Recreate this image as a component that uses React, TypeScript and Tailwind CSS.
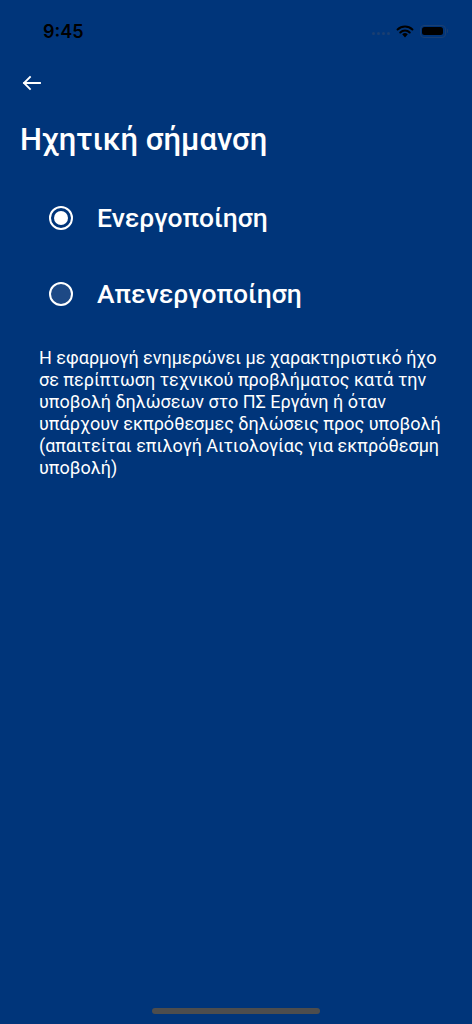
import React, { useState } from 'react';

const Radio = ({ checked }: { checked: boolean }) => (
  <span
    className={
      'flex h-[24px] w-[24px] items-center justify-center rounded-full border-2 border-white ' +
      (checked ? 'bg-transparent' : 'bg-[#1d4985]')
    }
  >
    {checked && <span className="h-[14px] w-[14px] rounded-full bg-white" />}
  </span>
);

export default function App() {
  const [enabled, setEnabled] = useState(true);

  return (
    <div className="relative flex h-[1024px] w-full flex-col bg-[#00357a] font-['Roboto',sans-serif] text-white">
      {/* Status bar */}
      <div className="flex h-[60px] items-center justify-between pl-[43px] pr-[24px] pt-[2px]">
        <span className="font-['Inter',sans-serif] text-[18px] font-semibold text-black">9:45</span>
        <div className="flex items-center gap-[6px]">
          <div className="flex items-center gap-[2px] pt-[4px]">
            <span className="h-[3px] w-[3px] rounded-full bg-[#1a3f72]" />
            <span className="h-[3px] w-[3px] rounded-full bg-[#1a3f72]" />
            <span className="h-[3px] w-[3px] rounded-full bg-[#1a3f72]" />
            <span className="h-[3px] w-[3px] rounded-full bg-[#1a3f72]" />
          </div>
          <svg width="18" height="13" viewBox="0 0 18 13">
            <path d="M9 12.5 L6.2 9.3 A4 4 0 0 1 11.8 9.3 Z" fill="black" />
            <path d="M4.3 7.4 A6.8 6.8 0 0 1 13.7 7.4" stroke="black" strokeWidth="2.1" fill="none" strokeLinecap="round" />
            <path d="M1.6 4.5 A10.6 10.6 0 0 1 16.4 4.5" stroke="black" strokeWidth="2.1" fill="none" strokeLinecap="round" />
          </svg>
          <div className="flex items-center">
            <div className="flex h-[13px] w-[26px] items-center rounded-[4px] border border-[#1a3f72] p-[1.5px]">
              <div className="h-full w-full rounded-[2.5px] bg-black" />
            </div>
            <div className="ml-[1px] h-[4px] w-[1.5px] rounded-r bg-[#1a3f72]" />
          </div>
        </div>
      </div>

      {/* App bar */}
      <div className="flex h-[46px] items-center pl-[22px]">
        <svg width="19" height="16" viewBox="0 0 19 16" fill="none">
          <path d="M18 8H2M8 2L2 8l6 6" stroke="white" strokeWidth="1.8" strokeLinecap="square" />
        </svg>
      </div>

      <h1 className="mt-[14px] pl-[20px] text-[31px] font-medium leading-[40px]">Ηχητική σήμανση</h1>

      <div className="mt-[46px] flex flex-col gap-[52px] pl-[49px]">
        <button className="flex items-center gap-[24px] text-left" onClick={() => setEnabled(true)}>
          <Radio checked={enabled} />
          <span className="text-[26.5px] font-medium leading-[24px]">Ενεργοποίηση</span>
        </button>
        <button className="flex items-center gap-[24px] text-left" onClick={() => setEnabled(false)}>
          <Radio checked={!enabled} />
          <span className="text-[26.5px] font-medium leading-[24px]">Απενεργοποίηση</span>
        </button>
      </div>

      <p className="mt-[41px] pl-[39px] pr-[20px] text-[18px] leading-[22px]">
        Η εφαρμογή ενημερώνει με χαρακτηριστικό ήχο σε περίπτωση τεχνικού προβλήματος κατά την
        υποβολή δηλώσεων στο ΠΣ Εργάνη ή όταν υπάρχουν εκπρόθεσμες δηλώσεις προς υποβολή
        (απαιτείται επιλογή Αιτιολογίας για εκπρόθεσμη υποβολή)
      </p>

      <div className="absolute bottom-[10px] left-1/2 h-[6px] w-[168px] -translate-x-1/2 rounded-full bg-[#4d4d4d]" />
    </div>
  );
}
